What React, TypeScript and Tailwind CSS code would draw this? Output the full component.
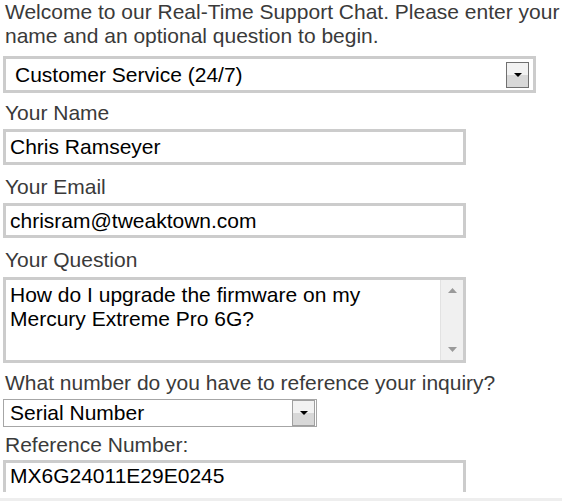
const font = { fontFamily: '"Liberation Sans", Arial, sans-serif' };

const Arrow = ({ up = false }: { up?: boolean }) => (
  <svg width="9" height="5" viewBox="0 0 9 5">
    <path d={up ? "M0 5 L4.5 0 L9 5 Z" : "M0 0 L9 0 L4.5 5 Z"} fill="currentColor" />
  </svg>
);

const DropButton = ({ className }: { className: string }) => (
  <div
    className={`flex items-center justify-center border border-[#707070] bg-gradient-to-b from-[#f2f2f2] from-50% to-[#d8d8d8] to-50% ${className}`}
  >
    <svg width="8" height="4" viewBox="0 0 8 4">
      <path d="M0 0 L8 0 L4 4 Z" fill="#000" />
    </svg>
  </div>
);

const Label = ({ children, className = "" }: { children: React.ReactNode; className?: string }) => (
  <div className={`pl-[2px] text-[21px] leading-[24px] text-[#3a3a3a] ${className}`}>{children}</div>
);

const Field = ({ value, className = "" }: { value: string; className?: string }) => (
  <div
    className={`flex w-[463px] items-center border-[3px] border-[#cccccc] bg-white pl-[4px] text-[21px] text-black ${className}`}
  >
    {value}
  </div>
);

export default function App() {
  return (
    <div style={font} className="h-[501px] w-[562px] overflow-hidden bg-white">
      <div className="h-[492px] overflow-hidden pl-[3px]">
        <p className="pl-[2px] text-[21px] leading-[24px] text-[#3a3a3a]">
          Welcome to our Real-Time Support Chat. Please enter your name and an optional question to begin.
        </p>

        <div className="mt-[8px] flex h-[37px] w-[533px] items-center justify-between border-[3px] border-[#cccccc] bg-white pl-[9px] pr-[4px] text-[21px] text-black">
          <span>Customer Service (24/7)</span>
          <DropButton className="h-[26px] w-[23px]" />
        </div>

        <Label className="mt-[8px]">Your Name</Label>
        <Field value="Chris Ramseyer" className="mt-[4px] h-[36px]" />

        <Label className="mt-[10px]">Your Email</Label>
        <Field value="chrisram@tweaktown.com" className="mt-[4px] h-[35px]" />

        <Label className="mt-[10px]">Your Question</Label>
        <div className="mt-[5px] flex h-[86px] w-[463px] border-[3px] border-[#cccccc] bg-white">
          <div className="flex-1 pl-[4px] pt-[3px] text-[21px] leading-[24px] text-black">
            How do I upgrade the firmware on my
            <br />
            Mercury Extreme Pro 6G?
          </div>
          <div className="flex w-[23px] flex-col items-center justify-between border-l border-[#e2e2e2] bg-[#f0f0f0] py-[8px] text-[#9a9a9a]">
            <Arrow up />
            <Arrow />
          </div>
        </div>

        <Label className="mt-[8px]">What number do you have to reference your inquiry?</Label>
        <div className="mt-[4px] flex h-[28px] w-[314px] items-center justify-between border border-[#a6a6a6] bg-white pl-[6px] pr-[1px] text-[21px] text-black">
          <span>Serial Number</span>
          <DropButton className="h-[26px] w-[23px] border-[#a0a0a0]" />
        </div>

        <Label className="mt-[6px]">Reference Number:</Label>
        <div className="mt-[3px] flex h-[40px] w-[463px] items-start border-[3px] border-b-0 border-[#cccccc] bg-white pl-[4px] pt-[1px] text-[21px] leading-[24px] text-black">
          MX6G24011E29E0245
        </div>
      </div>
      <div className="mt-[6px] h-[3px] bg-[#eeeeee]" />
    </div>
  );
}
